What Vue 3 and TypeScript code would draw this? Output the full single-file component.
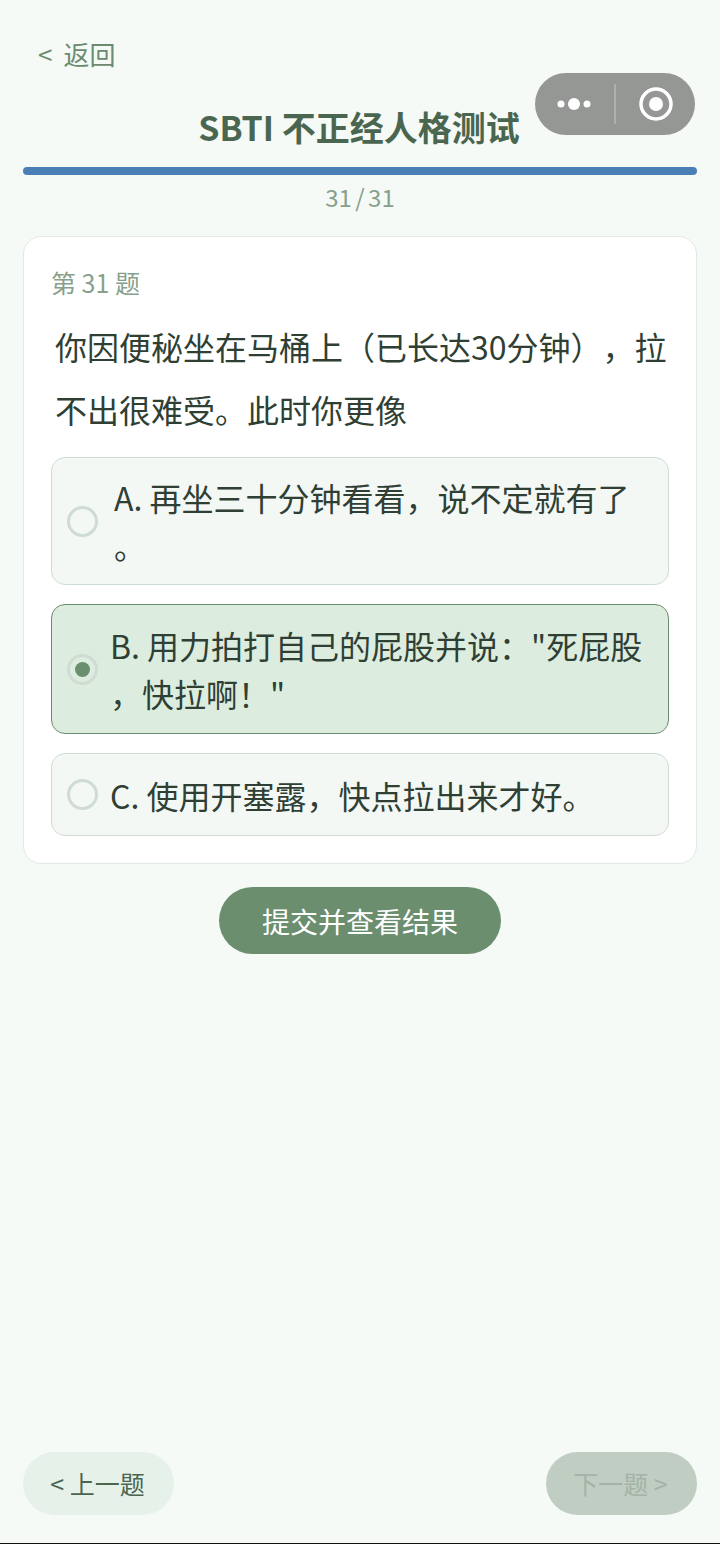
<script setup lang="ts">
import { ref } from 'vue'

interface Option {
  id: string
  lines: string[]
}

const options: Option[] = [
  { id: 'a', lines: ['A. 再坐三十分钟看看，说不定就有了', '。'] },
  { id: 'b', lines: ['B. 用力拍打自己的屁股并说："死屁股', '，快拉啊！"'] },
  { id: 'c', lines: ['C. 使用开塞露，快点拉出来才好。'] },
]

const selected = ref('b')
</script>

<template>
  <div class="page">
    <div class="capsule">
      <svg class="capsule__dots" width="36" height="14" viewBox="0 0 36 14">
        <circle cx="5" cy="7" r="3.5" fill="#fff" />
        <circle cx="18" cy="7" r="6" fill="#fff" />
        <circle cx="31" cy="7" r="3.5" fill="#fff" />
      </svg>
      <span class="capsule__line"></span>
      <svg class="capsule__target" width="36" height="36" viewBox="0 0 36 36">
        <circle cx="18" cy="18" r="15" fill="none" stroke="#fff" stroke-width="3.5" />
        <circle cx="18" cy="18" r="7" fill="#fff" />
      </svg>
    </div>

    <div class="back"><span>&lt;</span><span>返回</span></div>
    <h1 class="title">SBTI 不正经人格测试</h1>
    <div class="progress"><div class="progress__bar"></div></div>
    <div class="count">31 / 31</div>

    <section class="card">
      <div class="card__no">第 31 题</div>
      <div class="card__question">你因便秘坐在马桶上（已长达30分钟），拉<br />不出很难受。此时你更像</div>
      <div class="options">
        <div
          v-for="o in options"
          :key="o.id"
          class="option"
          :class="['option--' + o.id, { 'option--on': selected === o.id }]"
          @click="selected = o.id"
        >
          <span class="radio"><span v-if="selected === o.id" class="radio__dot"></span></span>
          <div class="option__text">
            <div v-for="l in o.lines" :key="l">{{ l }}</div>
          </div>
        </div>
      </div>
    </section>

    <button class="submit">提交并查看结果</button>

    <div class="nav">
      <button class="nav__btn">&lt; 上一题</button>
      <button class="nav__btn nav__btn--off" disabled>下一题 &gt;</button>
    </div>
  </div>
</template>

<style>
html, body { margin: 0; background: #f5faf6; }
</style>

<style scoped>
.page {
  position: relative; box-sizing: border-box; height: 1544px; padding: 0 23px;
  display: flex; flex-direction: column; background: #f5faf6; border-bottom: 1px solid #111;
  font-family: "Noto Sans CJK SC", "Noto Sans", sans-serif; color: #2f3f34; overflow: hidden;
  text-spacing-trim: space-all;
}
.capsule {
  position: absolute; top: 73px; left: 535px; width: 160px; height: 62px; border-radius: 31px;
  background: #949794; display: flex; align-items: center;
}
.capsule__dots { margin-left: 21px; }
.capsule__line { width: 2px; height: 40px; margin-left: 22px; background: #aeb0ae; }
.capsule__target { margin-left: 22px; }
.back {
  margin-top: 36px; padding-left: 15px; height: 38px; line-height: 36px; font-size: 26px; color: #6b8a70;
  display: flex; gap: 11px;
}
.title {
  margin: 29px 0 0; padding-right: 2px; height: 48px; line-height: 48px; font-size: 34px; font-weight: 700;
  text-align: center; color: #4a6650;
}
.progress { margin-top: 16px; height: 8px; border-radius: 4px; background: #dfe9e2; overflow: hidden; }
.progress__bar { width: 100%; height: 100%; background: #4a7fb5; }
.count { margin-top: 8px; height: 32px; line-height: 28px; font-size: 24px; word-spacing: -2px; text-align: center; color: #87a08b; }
.card {
  margin-top: 21px; box-sizing: border-box; height: 628px; padding: 27px 27px 27px;
  background: #fff; border: 1.5px solid #e2eae4; border-radius: 18px;
}
.card__no { height: 36px; line-height: 36px; font-size: 25px; color: #87a08b; }
.card__question { margin-top: 15px; padding-left: 4px; font-size: 32px; line-height: 63px; color: #2f3f34; white-space: nowrap; }
.options { margin-top: 16px; display: flex; flex-direction: column; gap: 19px; }
.option {
  box-sizing: border-box; display: flex; align-items: center; gap: 12px; padding: 15px 15px;
  background: #f4f8f5; border: 1.5px solid #d0dcd3; border-radius: 14px;
}
.option--a { height: 128px; }
.option--b { height: 130px; }
.option--c { height: 83px; }
.option--a .option__text { margin-left: 4px; }
.option--on { background: #dcede0; border-color: #6b8e6f; }
.radio {
  box-sizing: border-box; flex: none; width: 31px; height: 31px; border-radius: 50%;
  border: 3px solid #cfdcd2; display: flex; align-items: center; justify-content: center;
}
.radio__dot { width: 15px; height: 15px; border-radius: 50%; background: #6b8e6f; }
.option__text { font-size: 32px; line-height: 48px; white-space: nowrap; color: #2f3f34; }
.submit {
  align-self: center; margin-top: 23px; width: 282px; height: 67px; border: 0; border-radius: 34px;
  background: #6b8e6f; color: #fff; font: inherit; font-size: 28px;
}
.nav { margin-top: auto; margin-bottom: 28px; display: flex; justify-content: space-between; }
.nav__btn {
  width: 151px; height: 63px; border: 0; border-radius: 32px; background: #e6f1e9;
  color: #4a6650; font: inherit; font-size: 25px; padding: 0 2px 2px 0;
}
.nav__btn--off { background: #bfcdc2; color: #a3b3a7; }
</style>
